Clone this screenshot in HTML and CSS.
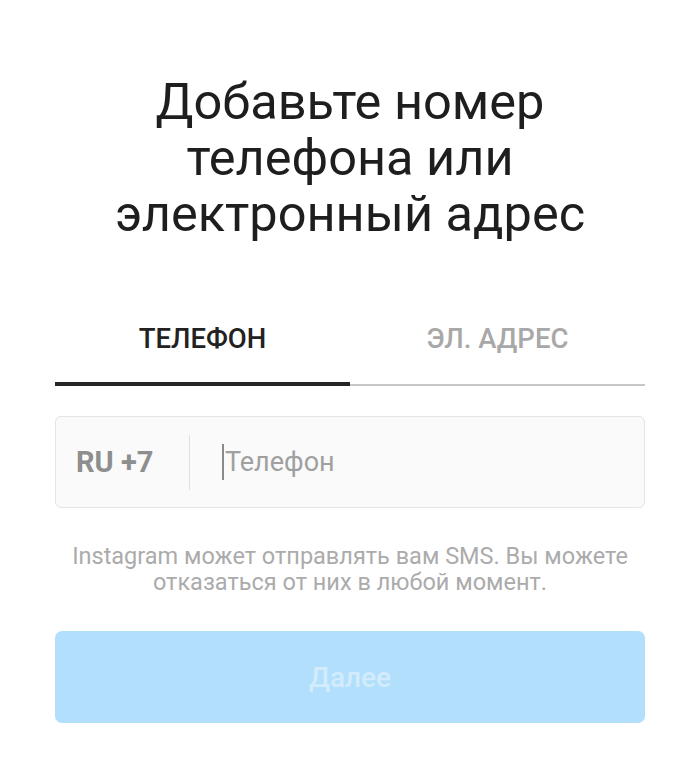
FILE: index.html
```html
<!DOCTYPE html>
<html lang="ru">
<head>
<meta charset="utf-8">
<link rel="stylesheet" href="styles.css">
</head>
<body>
<main class="page">
  <h1 class="title">Добавьте номер<br>телефона или<br>электронный адрес</h1>
  <div class="tabs">
    <div class="tab active">ТЕЛЕФОН</div>
    <div class="tab">ЭЛ. АДРЕС</div>
  </div>
  <div class="field">
    <div class="code">RU +7</div>
    <div class="divider"></div>
    <div class="input"><span class="cursor"></span>Телефон</div>
  </div>
  <p class="hint">Instagram может отправлять вам SMS. Вы можете<br>отказаться от них в любой момент.</p>
  <button class="next">Далее</button>
</main>
</body>
</html>
```
FILE: styles.css
```css
html, body {
  margin: 0;
  padding: 0;
  background: #fff;
}
body {
  font-family: Roboto, "Noto Sans", sans-serif;
  color: #262626;
}
.page {
  width: 590px;
  margin: 0 auto;
  padding-top: 74px;
  display: flex;
  flex-direction: column;
}
.title {
  margin: 0;
  font-weight: 400;
  font-size: 50.5px;
  line-height: 56px;
  text-align: center;
  color: #1e1e1e;
}
.tabs {
  margin-top: 72px;
  display: flex;
}
.tab {
  flex: 1;
  text-align: center;
  font-size: 27.5px;
  font-weight: 500;
  color: #a8a8a8;
  padding-top: 8px;
  height: 62px;
  border-bottom: 2px solid #c6c6c6;
}
.tab.active {
  color: #222;
  border-bottom: 4px solid #262626;
  height: 60px;
}
.field {
  margin-top: 30px;
  height: 92px;
  border: 1px solid #e4e4e4;
  border-radius: 6px;
  background: #fafafa;
  display: flex;
  align-items: center;
  box-sizing: border-box;
}
.code {
  padding-left: 20px;
  width: 113px;
  font-size: 29px;
  font-weight: 700;
  color: #8e8e8e;
}
.divider {
  width: 1px;
  height: 55px;
  background: #e0e0e0;
}
.input {
  margin-left: 32px;
  display: flex;
  align-items: center;
  font-size: 27px;
  color: #a0a0a0;
}
.cursor {
  display: inline-block;
  width: 2px;
  height: 36px;
  background: #8a8a8a;
  margin-right: 1px;
}
.hint {
  margin: 35px 0 0;
  text-align: center;
  font-size: 23.5px;
  line-height: 26px;
  color: #ababab;
}
.next {
  margin-top: 36px;
  height: 92px;
  border: none;
  border-radius: 7px;
  background: #b2dffc;
  color: #d3ecfd;
  font-family: Roboto, "Noto Sans", sans-serif;
  font-size: 28px;
  font-weight: 500;
}
```
